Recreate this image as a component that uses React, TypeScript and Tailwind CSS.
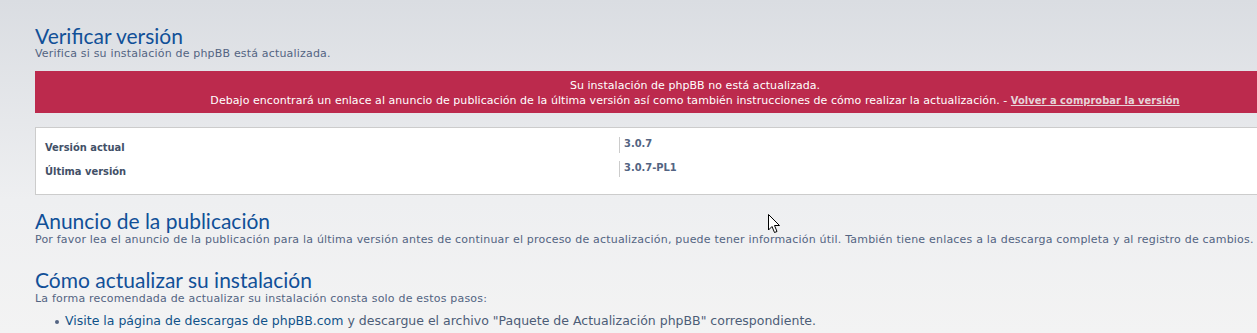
export default function App() {
  const body = "font-['DejaVu_Sans',sans-serif]";
  const cond = "font-['DejaVu_Sans_Condensed','DejaVu_Sans',sans-serif]";
  const head = "font-['Lato','Open_Sans',sans-serif]";

  return (
    <main className="relative w-[1257px] h-[333px] overflow-hidden bg-gradient-to-b from-[#dadde2] via-[#eeeff1] via-60% to-[#f3f3f3]">
      <div className="w-[1320px] ml-[35px] pt-[25px]">
        <h1 className={`${head} text-[21px] leading-[22px] text-[#115098]`}>Verificar versión</h1>
        <p className={`${body} text-[11px] leading-[14px] tracking-[0.18px] text-[#536482]`}>
          Verifica si su instalación de phpBB está actualizada.
        </p>

        <div className={`${body} mt-[10px] h-[42px] bg-[#bc2a4d] pt-[7px] text-center text-[11px] leading-[15px] tracking-[0.05px] text-white`}>
          <p>Su instalación de phpBB no está actualizada.</p>
          <p>
            Debajo encontrará un enlace al anuncio de publicación de la última versión así como también
            instrucciones de cómo realizar la actualización. -{' '}
            <a className={`${cond} font-bold underline text-[#e6d3d8]`}>Volver a comprobar la versión</a>
          </p>
        </div>

        <div className={`${cond} mt-[14px] h-[68px] bg-white border border-[#cccccc] pt-[9px] pl-[9px] text-[11px] font-bold`}>
          {[
            ['Versión actual', '3.0.7'],
            ['Última versión', '3.0.7-PL1'],
          ].map(([label, value]) => (
            <div key={label} className="flex h-[24px]">
              <div className="w-[574px] pt-[3px] leading-[16px] text-[#425067]">{label}</div>
              <div className="h-[16px] border-l border-[#cccccc] pl-[4px] leading-[14px] text-[#536482]">{value}</div>
            </div>
          ))}
        </div>

        <h2 className={`${head} mt-[15px] text-[21px] leading-[22px] text-[#115098]`}>Anuncio de la publicación</h2>
        <p className={`${body} text-[11px] leading-[16px] tracking-[0.2px] text-[#536482]`}>
          Por favor lea el anuncio de la publicación para la última versión antes de continuar el proceso de
          actualización, puede tener información útil. También tiene enlaces a la descarga completa y al registro de cambios.
        </p>

        <h2 className={`${head} mt-[21px] text-[21px] leading-[22px] text-[#115098]`}>Cómo actualizar su instalación</h2>
        <p className={`${body} text-[11px] leading-[16px] tracking-[0.2px] text-[#536482]`}>
          La forma recomendada de actualizar su instalación consta solo de estos pasos:
        </p>
        <ul className={`${body} mt-[5px] pl-[30px] text-[12.5px] leading-[18px] text-[#4c5d77]`}>
          <li className="relative flex items-center">
            <span className="absolute -left-[10px] top-[8px] w-[4px] h-[4px] rounded-full bg-[#536482]" />
            <a className="text-[#105289]">Visite la página de descargas de phpBB.com</a>
            &nbsp;y descargue el archivo "Paquete de Actualización phpBB" correspondiente.
          </li>
        </ul>
      </div>

      <svg className="absolute left-[768px] top-[214px]" width="13" height="20" viewBox="0 0 13 20">
        <path d="M0.5 0.5 L0.5 16 L4 12.5 L6.5 18.5 L9 17.5 L6.5 11.5 L11.5 11.5 Z" fill="#ffffff" stroke="#000000" strokeWidth="1" strokeLinejoin="miter" />
      </svg>
    </main>
  );
}
